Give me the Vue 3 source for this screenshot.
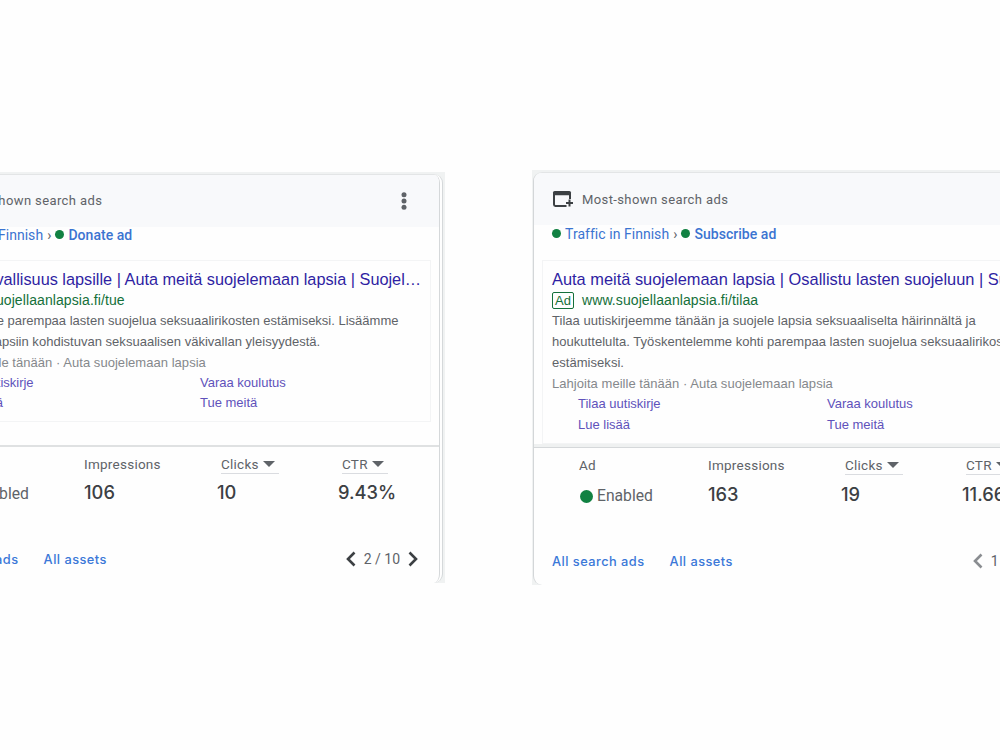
<template>
  <div class="page">
    <div v-for="c in cards" :key="c.id" class="frame" :class="c.id">
      <section class="card">
        <header class="head">
          <svg class="head-icon" viewBox="0 0 22 18">
            <path d="M14.500 16H3.400Q2 16 2 14.600V3" />
            <path d="M18 3v6" />
            <path class="solid" d="M1 5.200V2.600Q1 1 2.600 1h14.800Q19 1 19 2.600v2.600z" />
            <path d="M17.500 9.500v7M14 13h7" />
          </svg>
          <span class="head-title">Most-shown search ads</span>
          <svg class="more" viewBox="0 0 6 18">
            <circle cx="3" cy="2.700" r="2.500" />
            <circle cx="3" cy="9" r="2.500" />
            <circle cx="3" cy="15.300" r="2.500" />
          </svg>
        </header>

        <nav class="crumbs">
          <i class="dot"></i>
          <a>Traffic in Finnish</a>
          <span class="sep">›</span>
          <i class="dot"></i>
          <a class="current">{{ c.ad }}</a>
        </nav>

        <article class="preview">
          <div class="title">{{ c.title }}</div>
          <div class="url"><span class="badge">Ad</span>{{ c.url }}</div>
          <div v-for="line in c.lines" :key="line" class="desc">{{ line }}</div>
          <div class="callout">Lahjoita meille tänään · Auta suojelemaan lapsia</div>
          <div class="links">
            <a v-for="l in links" :key="l">{{ l }}</a>
          </div>
        </article>

        <div class="stats">
          <div class="stat">
            <div class="label">Ad</div>
            <div class="status"><i class="dot big"></i>Enabled</div>
          </div>
          <div class="stat">
            <div class="label">Impressions</div>
            <div class="value">{{ c.impressions }}</div>
          </div>
          <div class="stat sortable">
            <div class="label">Clicks<i class="caret"></i></div>
            <div class="value">{{ c.clicks }}</div>
          </div>
          <div class="stat sortable">
            <div class="label">CTR<i class="caret"></i></div>
            <div class="value">{{ c.ctr }}</div>
          </div>
        </div>

        <footer class="foot">
          <a>All search ads</a>
          <a>All assets</a>
          <div class="pager">
            <svg class="arrow prev" viewBox="0 0 10 16"><path d="M8.500 1.500L2 8l6.500 6.500" /></svg>
            <span>{{ c.page }} / 10</span>
            <svg class="arrow" viewBox="0 0 10 16"><path d="M1.500 1.500L8 8l-6.500 6.500" /></svg>
          </div>
        </footer>
      </section>
    </div>
  </div>
</template>

<script setup>
const links = ['Tilaa uutiskirje', 'Varaa koulutus', 'Lue lisää', 'Tue meitä']

const cards = [
  {
    id: 'donate',
    ad: 'Donate ad',
    title: 'Lasten turvallisuus lapsille | Auta meitä suojelemaan lapsia | Suojel…',
    url: 'www.suojellaanlapsia.fi/tue',
    lines: [
      'Rakennamme parempaa lasten suojelua seksuaalirikosten estämiseksi. Lisäämme',
      'tietoisuutta lapsiin kohdistuvan seksuaalisen väkivallan yleisyydestä.'
    ],
    impressions: '106',
    clicks: '10',
    ctr: '9.43%',
    page: 2
  },
  {
    id: 'subscribe',
    ad: 'Subscribe ad',
    title: 'Auta meitä suojelemaan lapsia | Osallistu lasten suojeluun | Suojellaan lapsia',
    url: 'www.suojellaanlapsia.fi/tilaa',
    lines: [
      'Tilaa uutiskirjeemme tänään ja suojele lapsia seksuaaliselta häirinnältä ja',
      'houkuttelulta. Työskentelemme kohti parempaa lasten suojelua seksuaalirikosten',
      'estämiseksi.'
    ],
    impressions: '163',
    clicks: '19',
    ctr: '11.66%',
    page: 1
  }
]
</script>

<style>
body {
  background: #fff;
}
</style>

<style scoped>
.page {
  display: flex;
  align-items: flex-start;
  gap: 87px;
  width: 1000px;
  height: 750px;
  overflow: hidden;
  font-family: Roboto, 'Liberation Sans', sans-serif;
  color: #5f6368;
  background: #fefefe;
}
.frame {
  box-sizing: border-box;
  flex: none;
  display: flex;
  overflow: hidden;
  background: #f0f2f2;
}
.donate {
  justify-content: flex-end;
  width: 445px;
  height: 411px;
  margin-top: 172px;
  padding: 2px 2px 0 0;
}
.subscribe {
  width: 468px;
  height: 415px;
  margin-top: 170px;
  padding: 2px 0 0 1px;
}
.card {
  box-sizing: border-box;
  flex: none;
  width: 532px;
  border: 1px solid #e3e5e6;
  border-left: 1px solid #d3d6d8;
  border-bottom: 0;
  border-radius: 9px;
  background: #fefefe;
  overflow: hidden;
}
.donate .card {
  width: 534px;
  border-right: 4px double #d5d8da;
}

.head {
  display: flex;
  align-items: center;
  height: 52px;
  padding: 0 32px 0 18px;
  background: #f8f9fb;
}
.donate .head {
  box-sizing: border-box;
  padding: 0 32px 1px 16px;
}
.head-icon {
  width: 22px;
  height: 18px;
  margin-right: 8px;
  fill: none;
  stroke: #3c4043;
  stroke-width: 2;
}
.head-icon .solid {
  fill: #3c4043;
  stroke: none;
}
.head-title {
  font-size: 13px;
  letter-spacing: 0.39px;
}
.more {
  width: 6px;
  height: 18px;
  margin-left: auto;
  fill: #5f6368;
}

.crumbs {
  display: flex;
  align-items: center;
  height: 17px;
  padding-left: 18px;
  font-size: 14px;
  letter-spacing: 0.04px;
  color: #3b74d1;
}
.donate .crumbs {
  height: 15px;
  padding-left: 16px;
}
.dot {
  flex: none;
  width: 9px;
  height: 9px;
  margin-right: 4px;
  border-radius: 50%;
  background: #118142;
}
.sep {
  margin: 0 4px;
  color: #5f6368;
}
.current {
  font-weight: 500;
}

.preview {
  box-sizing: border-box;
  width: 515px;
  margin: 18px 0 23px 6px;
  padding: 7px 0 0 8px;
  height: 162px;
  border: 1px solid #f3f4f5;
  font-family: 'Liberation Sans', Arial, sans-serif;
  font-size: 13px;
  white-space: nowrap;
  overflow: hidden;
}
.subscribe .preview {
  height: 184px;
  margin: 18px 0 0 8px;
  padding-left: 9px;
}
.title {
  height: 22px;
  line-height: 22px;
  font-size: 16.4px;
  color: #2f1fa3;
}
.donate .title {
  font-size: 16.3px;
  text-indent: -2px;
}
.url {
  display: flex;
  align-items: center;
  height: 20px;
  font-size: 14px;
  letter-spacing: 0.09px;
  color: #14703a;
}
.badge {
  box-sizing: border-box;
  width: 22px;
  height: 17px;
  margin-right: 8px;
  border: 1px solid #14703a;
  border-radius: 2px;
  font-size: 13px;
  line-height: 16px;
  text-align: center;
}
.desc,
.callout {
  height: 21px;
  line-height: 21px;
  letter-spacing: 0.04px;
}
.donate .desc {
  letter-spacing: 0;
  text-indent: -2px;
}
.donate .desc + .desc {
  letter-spacing: 0.02px;
  text-indent: 0;
}
.callout {
  height: 20px;
  color: #85888c;
}
.links {
  display: grid;
  grid-template-columns: 249px 1fr;
  grid-auto-rows: 21px;
  padding-left: 26px;
  line-height: 21px;
  color: #6052bb;
}
.donate .links {
  grid-auto-rows: 20px;
}

.stats {
  display: grid;
  grid-template-columns: 129px 137px 121px 1fr;
  padding: 7px 0 0 45px;
  border-top: 2px solid #dfe1e2;
}
.subscribe .stats {
  border-top: 1px solid #d5d8da;
  box-shadow: 0 -3px 0 #eff1f1;
  margin-top: 3px;
}
.label {
  box-sizing: border-box;
  display: flex;
  align-items: center;
  width: max-content;
  height: 20px;
  border-bottom: 1px solid transparent;
  font-size: 13.5px;
  letter-spacing: 0.25px;
}
.sortable .label {
  padding-right: 4px;
  border-color: #dadce0;
}
.caret {
  margin-left: 4px;
  border: 6px solid transparent;
  border-top-color: #5f6368;
  border-bottom: 0;
}
.value,
.status {
  height: 24px;
  margin-top: 6px;
  line-height: 24px;
}
.value {
  font-family: Inter, sans-serif;
  font-size: 18.3px;
  font-weight: 500;
  color: #3c4043;
}
.subscribe .value {
  margin-top: 7px;
}
.sortable .value {
  margin-left: -4px;
}
.status {
  display: flex;
  align-items: center;
  margin-top: 8px;
  font-size: 15.7px;
}
.subscribe .status {
  margin-top: 9px;
}
.dot.big {
  width: 13px;
  height: 13px;
  margin: 0 4px 0 1px;
}

.foot {
  display: flex;
  align-items: center;
  gap: 25px;
  height: 24px;
  margin: 41px 0 13px;
  padding: 0 21px 0 16px;
  font: 500 12.8px Inter, sans-serif;
  letter-spacing: 0.47px;
  color: #3b78d8;
}
.subscribe .foot {
  padding: 0 19px 0 18px;
}
.pager {
  display: flex;
  align-items: center;
  gap: 8px;
  margin-left: auto;
  font: 14px Roboto, sans-serif;
  letter-spacing: 0;
  color: #5f6368;
}
.arrow {
  width: 10px;
  height: 16px;
  fill: none;
  stroke: #3c4043;
  stroke-width: 2.6;
}
.subscribe .prev {
  stroke: #8a8d91;
}
</style>
